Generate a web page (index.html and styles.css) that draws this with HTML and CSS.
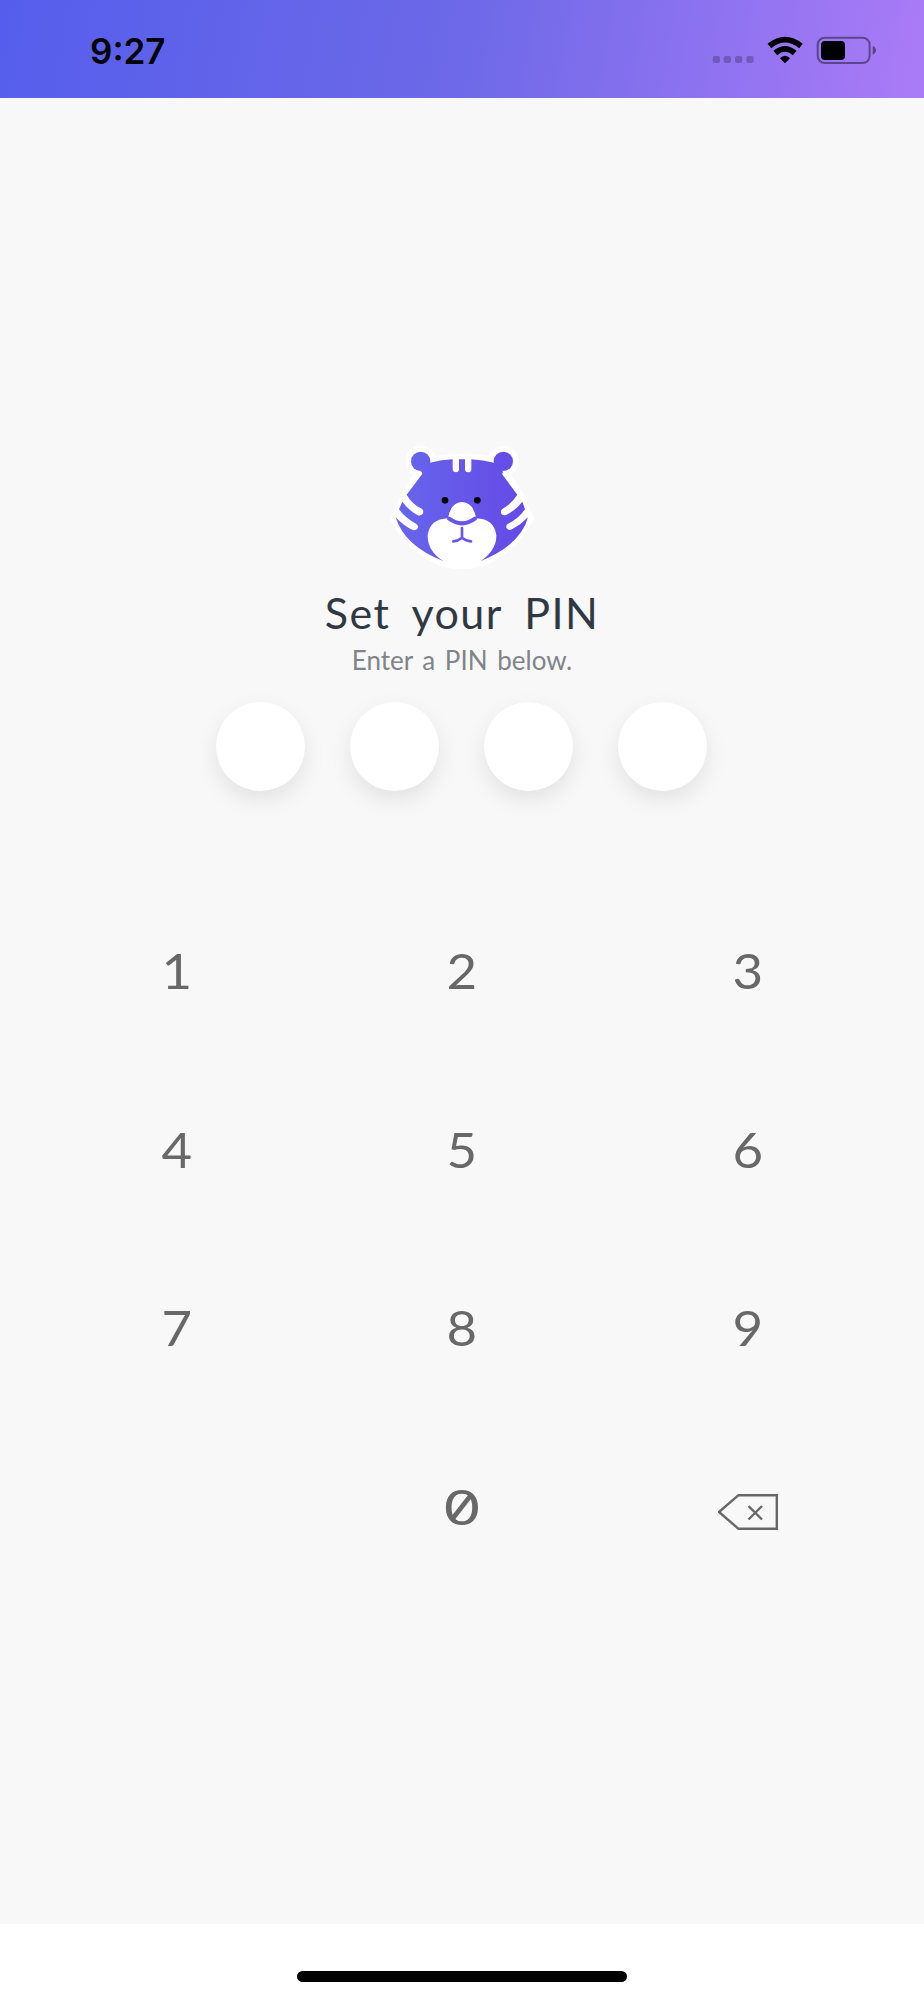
FILE: index.html
```
<!DOCTYPE html>
<html lang="en">
<head>
    <meta charset="UTF-8">
    <meta name="viewport" content="width=device-width, initial-scale=1.0">
    <title>Set your PIN</title>
    <link rel="stylesheet" href="styles.css">
</head>
<body>
    <header class="status-bar">
        <div class="time">9:27</div>
        <svg class="status-icons" viewBox="0 0 600 180">
            <g fill="#000" fill-opacity="0.22">
                <rect x="68" y="108" width="22" height="21" rx="6"/>
                <rect x="101" y="108" width="22" height="21" rx="6"/>
                <rect x="135" y="108" width="22" height="21" rx="6"/>
                <rect x="169" y="108" width="22" height="21" rx="6"/>
            </g>
            <path d="M285 130L270 115Q277 107 285 107Q293 107 300 115Z"/>
            <g fill="none" stroke="#000" stroke-width="17">
                <path d="M256 99Q285 74 314 99"/>
                <path d="M238 78Q285 40 333 78"/>
            </g>
            <rect x="383" y="53" width="156" height="76" rx="21" fill="none" stroke="#000" stroke-opacity="0.42" stroke-width="6"/>
            <rect x="393" y="63" width="72" height="57" rx="12"/>
            <path d="M548 78Q558 82 558 91Q558 100 548 104Z" fill-opacity="0.45"/>
        </svg>
    </header>

    <main class="content">
        <svg class="logo" viewBox="0 0 492 405">
            <defs>
                <linearGradient id="fur" gradientUnits="userSpaceOnUse" x1="50" y1="0" x2="440" y2="0">
                    <stop offset="0" stop-color="#6666ec"/>
                    <stop offset="1" stop-color="#6549e6"/>
                </linearGradient>
            </defs>
            <path class="outline" d="M150 67Q246 49 342 67L369 96L412 165L444 235Q402 322 301 364Q246 378 190 364Q90 318 48 235L81 165L124 96Z"/>
            <circle class="outline" cx="122" cy="64" r="29"/>
            <circle class="outline" cx="370" cy="64" r="29"/>
            <g fill="url(#fur)">
                <circle cx="122" cy="64" r="29"/>
                <circle cx="370" cy="64" r="29"/>
                <path d="M150 68Q184 59 218 58V90Q220 97 228 97Q236 97 237 90V58H255V90Q256 97 264 97Q273 97 274 90V58Q310 60 342 68L370 96Q365 100 368 105L412 164Q396 190 367 207Q360 213 364 221Q370 229 380 224Q408 210 427 185L435 208Q414 238 384 251Q376 256 380 265Q386 273 396 268Q424 253 444 232Q423 314 301 364Q350 330 349 286Q343 237 288 235Q280 187 246 187Q212 187 205 235Q149 237 143 286Q142 333 191 364Q73 318 47 232Q70 257 98 270Q108 273 113 265Q117 257 108 251Q78 236 57 208L67 185Q88 213 113 226Q126 229 130 217Q131 210 123 205Q94 190 80 164L126 103Q128 98 122 94Z"/>
            </g>
            <path fill="#fff" d="M205 230Q216 187 246 187Q274 187 287 230Q246 270 205 230Z"/>
            <path class="mouth" stroke-width="12" d="M207 236Q246 264 285 236"/>
            <path class="mouth" stroke-width="8" d="M246 264V293M220 304Q234 303 246 293Q258 303 273 304"/>
            <circle cx="195" cy="181" r="10"/>
            <circle cx="292" cy="181" r="10"/>
        </svg>

        <h1>Set your PIN</h1>
        <p class="subtitle">Enter a PIN below.</p>

        <div class="pin">
            <span class="dot"></span>
            <span class="dot"></span>
            <span class="dot"></span>
            <span class="dot"></span>
        </div>

        <div class="keypad">
            <div class="key">1</div>
            <div class="key">2</div>
            <div class="key">3</div>
            <div class="key">4</div>
            <div class="key">5</div>
            <div class="key">6</div>
            <div class="key">7</div>
            <div class="key">8</div>
            <div class="key">9</div>
            <div class="key"></div>
            <div class="key"><span class="zero">0</span></div>
            <div class="key">
                <svg class="backspace" viewBox="0 0 60 36">
                    <path d="M1 18L20.5 1.2H58.8V34.8H20.5Z"/>
                    <path d="M30.5 12L44 25.5M44 12L30.5 25.5"/>
                </svg>
            </div>
        </div>
    </main>

    <footer class="home-area">
        <div class="home-bar"></div>
    </footer>
</body>
</html>
```
FILE: styles.css
```
* {
    margin: 0;
    padding: 0;
    box-sizing: border-box;
}

body {
    font-family: Lato, 'Open Sans', sans-serif;
    background: #fff;
    height: 2000px;
    display: flex;
    flex-direction: column;
}

.status-bar {
    height: 98px;
    background: linear-gradient(100deg, #555eec 0%, #6d69e8 50%, #ab7bf7 100%);
    display: flex;
    justify-content: space-between;
    padding: 20px 34px 0 90px;
}

.time {
    font-family: Inter, sans-serif;
    font-size: 35px;
    font-weight: 600;
    line-height: 62px;
    color: #000;
}

.status-icons {
    width: 200px;
    height: 60px;
}

.content {
    height: 1826px;
    background: #f8f8f8;
    display: flex;
    flex-direction: column;
    align-items: center;
    padding-top: 342px;
}

.logo {
    width: 164px;
    height: 135px;
}

.outline {
    fill: #fff;
    stroke: #fff;
    stroke-width: 34;
    stroke-linejoin: round;
}

.mouth {
    fill: none;
    stroke: #6757e9;
    stroke-linecap: round;
}

h1 {
    font-size: 43px;
    font-weight: 400;
    line-height: 52px;
    letter-spacing: 1.4px;
    word-spacing: 10px;
    margin-top: 12px;
    color: #303943;
}

.subtitle {
    font-size: 26px;
    line-height: 32px;
    word-spacing: 3px;
    margin-top: 5px;
    color: #808488;
}

.pin {
    display: flex;
    gap: 44.6px;
    margin-top: 26px;
    margin-right: 1px;
}

.dot {
    width: 89.4px;
    height: 89.4px;
    border-radius: 50%;
    background: #fff;
    box-shadow: 0 9px 22px rgba(0, 0, 0, 0.09);
}

.keypad {
    display: grid;
    grid-template-columns: repeat(3, 285.5px);
    grid-auto-rows: 178.7px;
    margin-top: 89.6px;
}

.key {
    display: flex;
    align-items: center;
    justify-content: center;
    font-size: 48px;
    color: #686868;
}

/* wider digits */
.key:not(:last-child) {
    transform: scaleX(1.1);
}

.zero {
    position: relative;
    transform: scaleX(1.17);
}

/* slash through the zero */
.zero::after {
    content: '';
    position: absolute;
    left: 50%;
    top: 50%;
    width: 3.5px;
    height: 29px;
    margin: -14px 0 0 -2px;
    background: #686868;
    transform: rotate(31deg);
}

.backspace {
    width: 60px;
    height: 36px;
    margin: 12px 0 0 0;
    fill: none;
    stroke: #686868;
    stroke-width: 2.4;
}

.home-area {
    height: 76px;
    display: flex;
    justify-content: center;
    padding-top: 47px;
}

.home-bar {
    width: 330px;
    height: 11px;
    border-radius: 6px;
    background: #000;
}
```
